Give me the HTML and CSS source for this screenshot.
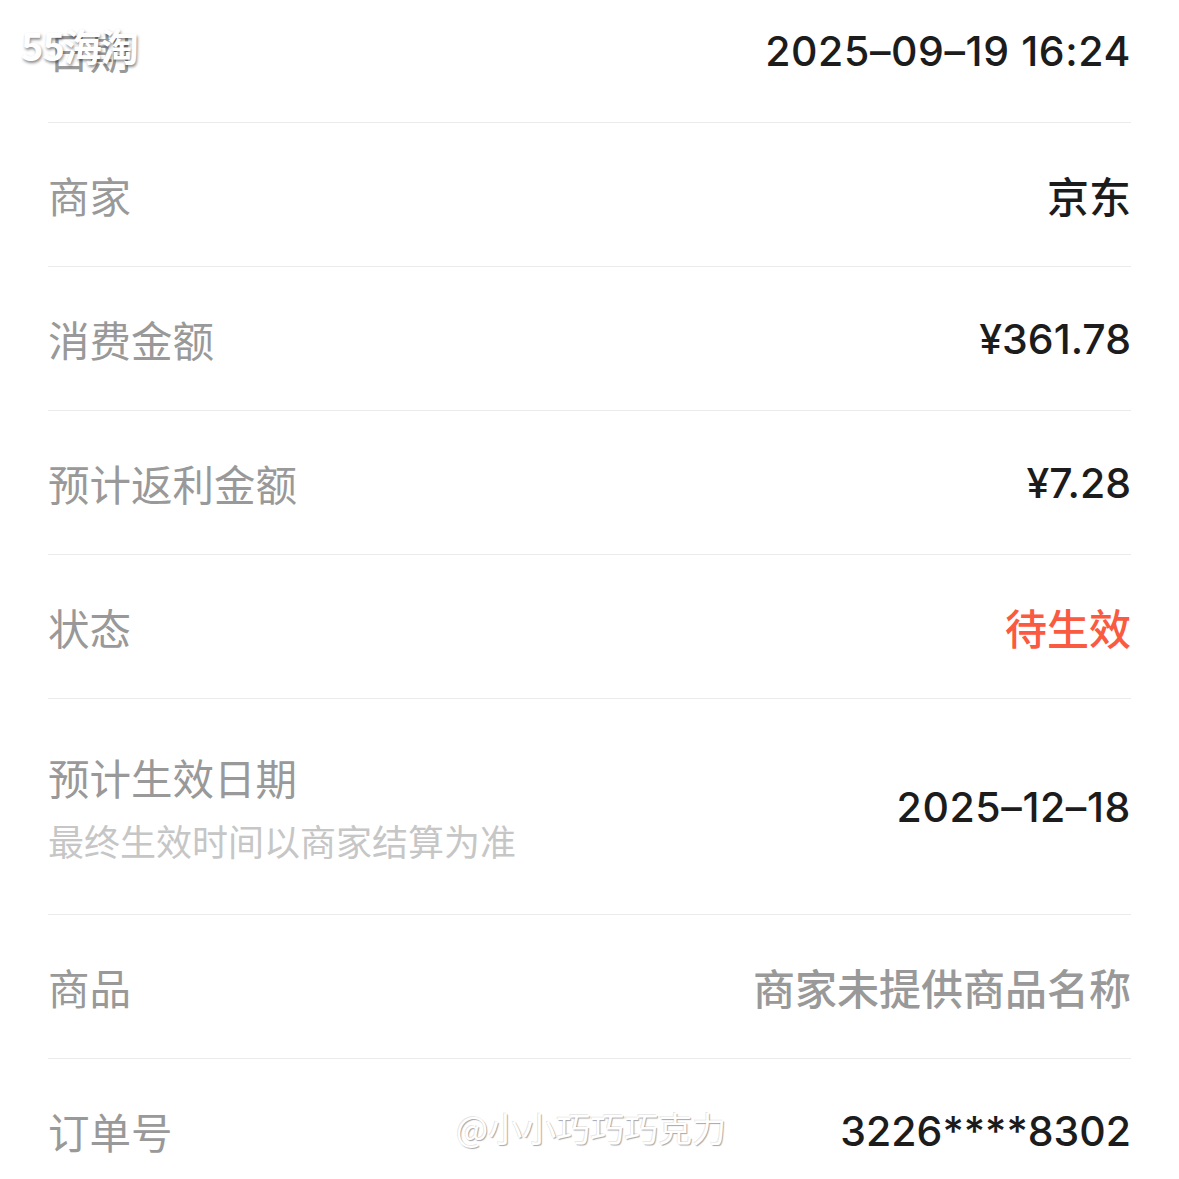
FILE: index.html
```html
<!DOCTYPE html>
<html lang="zh-CN">
<head>
    <meta charset="UTF-8">
    <meta name="viewport" content="width=device-width, initial-scale=1.0">
    <title>订单详情</title>
    <link rel="stylesheet" href="styles.css">
</head>
<body>
    <div class="page">
        <ul class="detail-list">
            <li class="detail-row">
                <span class="label">日期</span>
                <span class="value date">2025–09–19 16:24</span>
            </li>
            <li class="detail-row">
                <span class="label">商家</span>
                <span class="value text">京东</span>
            </li>
            <li class="detail-row">
                <span class="label">消费金额</span>
                <span class="value">¥361.78</span>
            </li>
            <li class="detail-row">
                <span class="label">预计返利金额</span>
                <span class="value">¥7.28</span>
            </li>
            <li class="detail-row">
                <span class="label">状态</span>
                <span class="value text pending">待生效</span>
            </li>
            <li class="detail-row tall">
                <div class="label-group">
                    <span class="label">预计生效日期</span>
                    <span class="hint">最终生效时间以商家结算为准</span>
                </div>
                <span class="value date">2025–12–18</span>
            </li>
            <li class="detail-row">
                <span class="label">商品</span>
                <span class="value text muted">商家未提供商品名称</span>
            </li>
            <li class="detail-row">
                <span class="label">订单号</span>
                <span class="value">3226****8302</span>
            </li>
        </ul>

        <div class="watermark site">55海淘</div>
        <div class="watermark author">@小小巧巧巧克力</div>
    </div>
</body>
</html>
```

FILE: styles.css
```css
:root {
    --label-color: #999999;
    --value-color: #1c1c1c;
    --hint-color: #c6c6c6;
    --accent-color: #fa5a40;
    --border-color: #ebebeb;
}

* {
    margin: 0;
    padding: 0;
    box-sizing: border-box;
}

body {
    background-color: #fff;
    font-family: Inter, "Noto Sans CJK SC", sans-serif;
    overflow: hidden;
}

.page {
    position: relative;
    height: 1179px;
    overflow: hidden;
}

/* список прокручен: первая строка уходит под верхний край */
.detail-list {
    list-style: none;
    padding: 0 48px;
    margin-top: -21px;
}

.detail-row {
    display: flex;
    justify-content: space-between;
    align-items: center;
    height: 144px;
    border-bottom: 1px solid var(--border-color);
}

.detail-row.tall {
    height: 216px;
}

.label {
    font-size: 41.5px;
    color: var(--label-color);
    font-family: "Noto Sans CJK SC", sans-serif;
}

.label-group {
    display: flex;
    flex-direction: column;
    gap: 7px;
}

.hint {
    font-size: 36px;
    color: var(--hint-color);
    font-family: "Noto Sans CJK SC", sans-serif;
}

.value {
    font-size: 41px;
    font-weight: 500;
    color: var(--value-color);
}

.value.date {
    letter-spacing: 0.6px;
}

.value.text {
    font-size: 42px;
    font-family: "Noto Sans CJK SC", sans-serif;
}

.value.pending {
    color: var(--accent-color);
}

.value.muted {
    color: var(--label-color);
}

.watermark {
    position: absolute;
    color: #fff;
    font-family: "Noto Sans CJK SC", sans-serif;
    white-space: nowrap;
}

.watermark.site {
    top: 17px;
    left: 21px;
    font-size: 38px;
    font-weight: 700;
    letter-spacing: -1px;
    text-shadow: 1px 2px 3px rgba(0, 0, 0, 0.45);
}

.watermark.author {
    top: 1103px;
    left: 456px;
    font-size: 34px;
    text-shadow: 1px 1px 1px rgba(0, 0, 0, 0.35), -1px -1px 0 rgba(0, 0, 0, 0.1);
}
```
